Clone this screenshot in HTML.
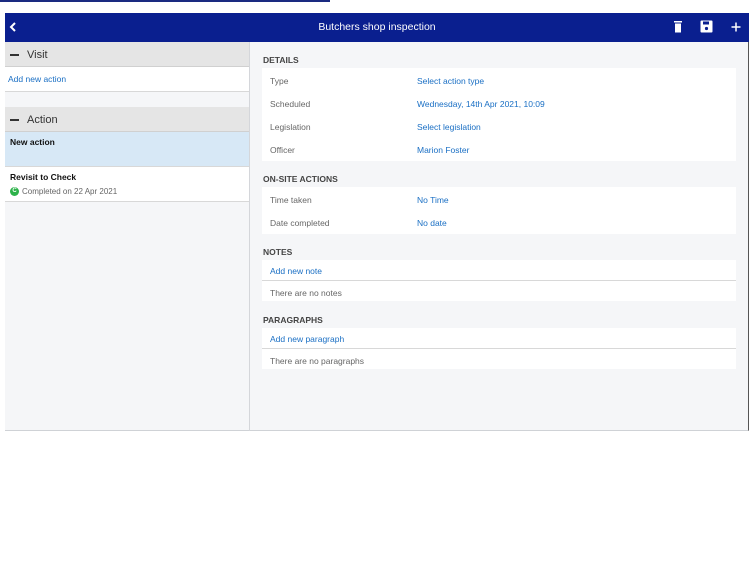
<!DOCTYPE html>
<html><head><style>
*{margin:0;padding:0;box-sizing:border-box}
body{width:750px;height:562px;background:#fff;font-family:"Liberation Sans",sans-serif;position:relative;overflow:hidden}
.a{position:absolute}
.hdr{left:5px;top:13px;width:744px;height:29px;background:#0a1f8f;color:#fff;font-size:10.5px;text-align:center;line-height:29px}
.main{left:5px;top:42px;width:744px;height:389px;background:#f5f6f8;border-bottom:1px solid #cfd2d6;border-right:1px solid #555}
.side{left:5px;top:42px;width:245px;height:389px;border-right:1px solid #d4d6da}
.gh{position:absolute;left:0;width:244px;height:25px;background:#e5e5e5;border-bottom:1px solid #d0d0d0;font-size:11px;color:#333;line-height:27px;padding-left:22px}
.gh:before{content:"";position:absolute;left:5px;top:12px;width:9px;height:1.5px;background:#333}
.row{position:absolute;left:0;width:244px;background:#fff;border-bottom:1px solid #d8d8d8}
.blue{color:#1a6fc4}
.sec{position:absolute;left:263px;font-size:8.5px;font-weight:bold;color:#444}
.pnl{position:absolute;left:262px;width:474px;background:#fff}
.r{position:absolute;font-size:8.5px;color:#666}
.v{position:absolute;left:155px;font-size:8.5px;color:#1a6fc4}
</style></head><body>
<div class="a" style="left:0;top:0;width:330px;height:2px;background:#1a2a80"></div>
<div class="a hdr">Butchers shop inspection</div>
<svg class="a" style="left:9px;top:22px" width="8" height="10"><path d="M6 1L2 5L6 9" stroke="#fff" stroke-width="2" fill="none"/></svg>
<svg class="a" style="left:673px;top:20px" width="10" height="13"><rect x="1" y="1" width="8" height="1.5" fill="#fff"/><rect x="2" y="3.5" width="6" height="9" fill="#fff"/></svg>
<svg class="a" style="left:700px;top:20px" width="13" height="13"><rect x="0.5" y="0.5" width="12" height="12" rx="1" fill="#fff"/><rect x="3" y="1.5" width="6" height="3" fill="#0a1f8f"/><circle cx="6.5" cy="8.5" r="1.6" fill="#0a1f8f"/></svg>
<svg class="a" style="left:731px;top:22px" width="10" height="10"><path d="M5 0.5V9.5M0.5 5H9.5" stroke="#fff" stroke-width="1.5"/></svg>
<div class="a main"></div>
<div class="a side">
<div class="gh" style="top:0">Visit</div>
<div class="row blue" style="top:25px;height:25px;font-size:8.5px;line-height:25px;padding-left:3px">Add new action</div>
<div class="gh" style="top:65px">Action</div>
<div class="row" style="top:90px;height:35px;background:#d7e8f6;font-size:8.5px;font-weight:bold;color:#111;padding:5px 0 0 5px">New action</div>
<div class="row" style="top:125px;height:35px;font-size:8.5px;color:#111;padding:5px 0 0 5px"><b>Revisit to Check</b>
<div style="margin-top:5px;color:#666;font-size:8px;display:flex;align-items:center"><span style="display:inline-block;width:9px;height:9px;border-radius:50%;background:#2db24a;color:#fff;font-size:6px;text-align:center;line-height:9px;font-weight:bold;margin-right:3px">C</span>Completed on 22 Apr 2021</div></div>
</div>
<div class="sec" style="top:55px">DETAILS</div>
<div class="pnl" style="top:68px;height:93px">
<div class="r" style="left:8px;top:8px">Type</div><div class="v" style="top:8px">Select action type</div>
<div class="r" style="left:8px;top:31px">Scheduled</div><div class="v" style="top:31px">Wednesday, 14th Apr 2021, 10:09</div>
<div class="r" style="left:8px;top:54px">Legislation</div><div class="v" style="top:54px">Select legislation</div>
<div class="r" style="left:8px;top:77px">Officer</div><div class="v" style="top:77px">Marion Foster</div>
</div>
<div class="sec" style="top:174px">ON-SITE ACTIONS</div>
<div class="pnl" style="top:187px;height:47px">
<div class="r" style="left:8px;top:8px">Time taken</div><div class="v" style="top:8px">No Time</div>
<div class="r" style="left:8px;top:31px">Date completed</div><div class="v" style="top:31px">No date</div>
</div>
<div class="sec" style="top:247px">NOTES</div>
<div class="pnl" style="top:260px;height:41px">
<div class="v" style="left:8px;top:6px">Add new note</div>
<div style="position:absolute;left:0;top:20px;width:474px;height:1px;background:#d8d8d8"></div>
<div class="r" style="left:8px;top:28px">There are no notes</div>
</div>
<div class="sec" style="top:315px">PARAGRAPHS</div>
<div class="pnl" style="top:328px;height:41px">
<div class="v" style="left:8px;top:6px">Add new paragraph</div>
<div style="position:absolute;left:0;top:20px;width:474px;height:1px;background:#d8d8d8"></div>
<div class="r" style="left:8px;top:28px">There are no paragraphs</div>
</div>
</body></html>
